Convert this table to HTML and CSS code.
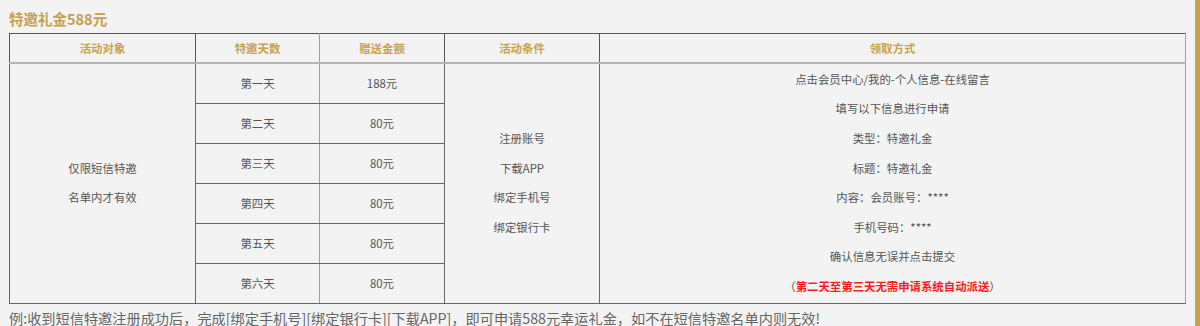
FILE: index.html
```html
<!DOCTYPE html>
<html lang="zh-CN">
<head>
<meta charset="utf-8">
<title>特邀礼金588元</title>
<link rel="stylesheet" href="styles.css">
</head>
<body>
<div class="page">
  <div class="content">
    <h2 class="title">特邀礼金588元</h2>
    <table class="gift">
      <colgroup>
        <col class="c1"><col class="c2"><col class="c3"><col class="c4"><col class="c5">
      </colgroup>
      <thead>
        <tr>
          <th>活动对象</th>
          <th class="soft-r">特邀天数</th>
          <th>赠送金额</th>
          <th>活动条件</th>
          <th class="last">领取方式</th>
        </tr>
      </thead>
      <tbody>
        <tr>
          <td rowspan="6"><div class="stack"><span>仅限短信特邀</span><span>名单内才有效</span></div></td>
          <td class="soft-r">第一天</td>
          <td>188元</td>
          <td rowspan="6"><div class="stack"><span>注册账号</span><span>下载APP</span><span>绑定手机号</span><span>绑定银行卡</span></div></td>
          <td rowspan="6" class="last"><div class="stack">
            <span>点击会员中心/我的-个人信息-在线留言</span>
            <span>填写以下信息进行申请</span>
            <span>类型：特邀礼金</span>
            <span>标题：特邀礼金</span>
            <span>内容：会员账号：****</span>
            <span>手机号码：****</span>
            <span>确认信息无误并点击提交</span>
            <span>（<b class="red">第二天至第三天无需申请系统自动派送</b>）</span>
          </div></td>
        </tr>
        <tr><td class="soft-r">第二天</td><td>80元</td></tr>
        <tr><td class="soft-r">第三天</td><td>80元</td></tr>
        <tr><td class="soft-r">第四天</td><td>80元</td></tr>
        <tr><td class="soft-r">第五天</td><td>80元</td></tr>
        <tr><td class="soft-r">第六天</td><td>80元</td></tr>
      </tbody>
    </table>
    <p class="note">例:收到短信特邀注册成功后，完成[绑定手机号][绑定银行卡][下载APP]，即可申请588元幸运礼金，如不在短信特邀名单内则无效!</p>
  </div>
  <div class="edge"></div>
</div>
</body>
</html>
```

FILE: styles.css
```css
html, body {
  margin: 0;
  padding: 0;
  background: #f3f3f3;
  font-family: "Noto Sans CJK SC", "Noto Sans", sans-serif;
  overflow: hidden;
}

.page {
  display: flex;
  min-height: 100vh;
}

.content {
  flex: 1;
  padding: 8px 10px 0 9px;
  min-width: 0;
}

.edge {
  width: 5px;
  flex: none;
  background: #c5a24c;
}

.title {
  margin: 0 0 4px 0;
  height: 21px;
  line-height: 21px;
  font-size: 14.5px;
  font-weight: 700;
  color: #c6a04a;
}

.gift {
  width: 1176px;
  border-collapse: collapse;
  table-layout: fixed;
  border-top: 1px solid #333;
  border-left: 1px solid #555;
  border-bottom: 1px solid #6a6a6a;
  font-size: 11.4px;
  color: #555;
}

.c1 { width: 186px; }
.c2 { width: 124px; }
.c3 { width: 125px; }
.c4 { width: 155px; }
.c5 { width: 586px; }

.gift th,
.gift td {
  border: 1px solid #555;
  text-align: center;
  vertical-align: middle;
  padding: 0;
}

.gift th {
  height: 28px;
  border-bottom: 2px solid #b4b4b4;
  font-weight: 700;
  color: #c9a24a;
}

.gift tbody tr {
  height: 40px;
}

.gift td {
  border-color: #666;
}

.gift .soft-r {
  border-right-color: #a0a0a0;
}

.gift .last {
  border-right-color: #a0a0a0;
}

.stack {
  display: flex;
  flex-direction: column;
  align-items: center;
  line-height: 29.6px;
}

.red {
  color: #ff1a1a;
  font-weight: 700;
}

.note {
  margin: 4px 0 0 0;
  font-size: 14.2px;
  line-height: 20px;
  color: #666;
  white-space: nowrap;
}
```
